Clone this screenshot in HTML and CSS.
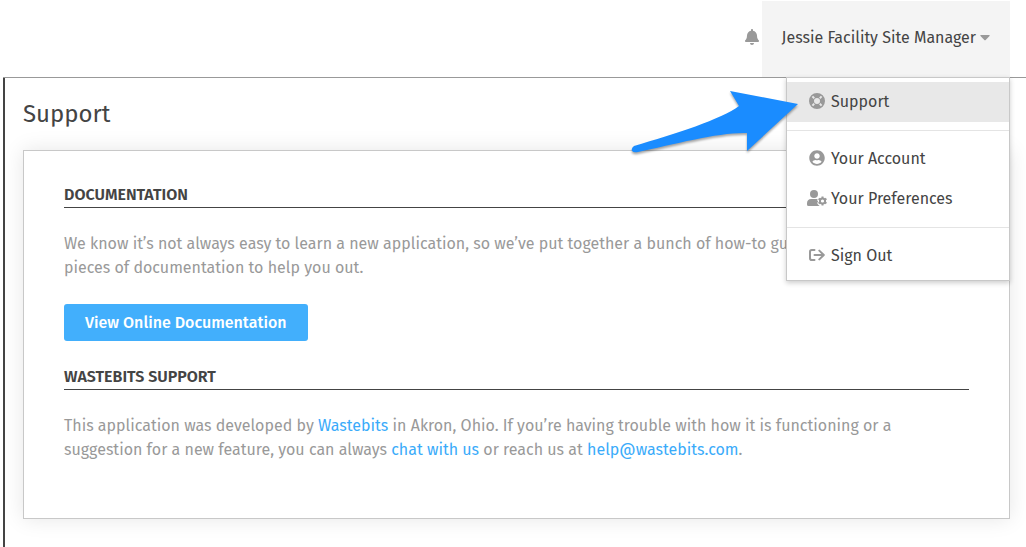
FILE: index.html
```html
<!DOCTYPE html>
<html lang="en">
<head>
    <meta charset="UTF-8">
    <meta name="viewport" content="width=device-width, initial-scale=1.0">
    <title>Support</title>
    <link rel="stylesheet" href="styles.css">
</head>
<body>
    <header class="topbar">
        <button type="button" class="bell" aria-label="Notifications">
            <svg width="14" height="16" viewBox="0 0 448 512"><path d="M224 512c35.32 0 63.97-28.65 63.97-64H160.03c0 35.35 28.65 64 63.97 64zm215.39-149.71c-19.32-20.76-55.47-51.99-55.47-154.29 0-77.7-54.48-139.9-127.94-155.16V32c0-17.67-14.32-32-31.98-32s-31.98 14.33-31.98 32v20.84C118.56 68.1 64.08 130.3 64.08 208c0 102.3-36.15 133.53-55.47 154.29-6 6.45-8.66 14.16-8.61 21.71.11 16.4 12.98 32 32.1 32h383.8c19.12 0 32-15.6 32.1-32 .05-7.55-2.61-15.27-8.61-21.71z"/></svg>
        </button>
        <div class="user">
            <button type="button" class="user-toggle" aria-expanded="true">
                Jessie Facility Site Manager
                <svg width="10" height="6" viewBox="0 0 10 6"><path d="M1 0h8q1.2.2.5 1.1L5.7 4.9q-.7.6-1.4 0L.5 1.1Q-.2.2 1 0z"/></svg>
            </button>
            <nav class="menu">
                <a href="#" class="menu-item active">
                    <svg width="20" height="16" viewBox="-10 -8 20 16">
                        <circle class="ring" r="5.5"/>
                        <path class="ticks" d="M-2.8-2.8l-1.8-1.8M2.8-2.8l1.8-1.8M-2.8 2.8l-1.8 1.8M2.8 2.8l1.8 1.8"/>
                    </svg>
                    Support
                </a>
                <hr>
                <a href="#" class="menu-item">
                    <svg width="20" height="16" viewBox="-72 0 640 512"><path d="M248 8C111 8 0 119 0 256s111 248 248 248 248-111 248-248S385 8 248 8zm0 96c48.6 0 88 39.4 88 88s-39.4 88-88 88-88-39.4-88-88 39.4-88 88-88zm0 344c-58.7 0-111.3-26.6-146.5-68.2 18.8-35.4 55.6-59.8 98.5-59.8 2.4 0 4.8.4 7.1 1.1 13 4.2 26.6 6.9 40.9 6.9 14.3 0 28-2.7 40.9-6.9 2.3-.7 4.7-1.1 7.1-1.1 42.9 0 79.7 24.4 98.5 59.8C359.3 421.4 306.7 448 248 448z"/></svg>
                    Your Account
                </a>
                <a href="#" class="menu-item">
                    <svg width="20" height="16" viewBox="0 0 20 16">
                        <circle cx="7" cy="4" r="4"/>
                        <path d="M4.2 9h5.6l.9.2-.5 1 .9 1.3-.9 1.5.8 1.5 1.6 1.5H1.5Q0 16 0 14.5v-1.3Q0 9.3 4.2 9z"/>
                        <circle class="cog" cx="15.5" cy="11" r="2.6"/>
                        <path class="teeth" d="M15.5 6.5v1.7M15.5 13.8v1.7M11.6 8.7l1.5.9M17.9 12.4l1.5.9M11.6 13.3l1.5-.9M17.9 9.6l1.5-.9"/>
                    </svg>
                    Your Preferences
                </a>
                <hr>
                <a href="#" class="menu-item">
                    <svg width="20" height="16" viewBox="0 0 20 16"><path class="line" d="M7.5 3H4.8Q3 3 3 4.8v6.4Q3 13 4.8 13h2.7M7.5 8h9M12.3 3.6L16.8 8l-4.5 4.4"/></svg>
                    Sign Out
                </a>
                <svg class="pointer" width="170" height="72" viewBox="0 0 170 72">
                    <path d="M169 14L101 1l9 15C93 29 46 44 5 56q-3 2-2 5 2 2 6 1C46 54 91 42 118 43v18z"/>
                </svg>
            </nav>
        </div>
    </header>
    <main class="content">
        <h1>Support</h1>
        <div class="card">
            <section>
                <h2>Documentation</h2>
                <p>We know it’s not always easy to learn a new application, so we’ve put together a bunch of how-to guides, tutorials and pieces of documentation to help you out.</p>
                <a href="#" class="btn">View Online Documentation</a>
            </section>
            <section>
                <h2>Wastebits Support</h2>
                <p>This application was developed by <a href="#">Wastebits</a> in Akron, Ohio. If you’re having trouble with how it is functioning or a suggestion for a new feature, you can always <a href="#">chat with us</a> or reach us at <a href="#">help@wastebits.com</a>.</p>
            </section>
        </div>
    </main>
</body>
</html>
```
FILE: styles.css
```css
* {
    box-sizing: border-box;
}
body {
    display: flex;
    flex-direction: column;
    min-height: 100vh;
    margin: 0 0 0 3px;
    font-family: "Fira Sans", "Noto Sans", sans-serif;
    font-size: 16px;
    line-height: 24px;
    color: #444;
    background: #fff;
}
button {
    border: 0;
    font: inherit;
    color: inherit;
    cursor: pointer;
}
svg {
    fill: #999;
}

/* top bar */
.topbar {
    display: flex;
    justify-content: flex-end;
    height: 78px;
    padding: 1px 16px 0 0;
    border-bottom: 1px solid #999;
}
.bell {
    display: flex;
    align-items: center;
    padding: 0 3px 4px;
    background: none;
}
.user {
    position: relative;
    display: flex;
}
.user-toggle {
    display: flex;
    align-items: center;
    gap: 4px;
    padding: 0 20px 2px;
    background: #f4f4f4;
}

/* dropdown */
.menu {
    position: absolute;
    top: 100%;
    right: 0;
    z-index: 2;
    width: 224px;
    padding: 4px 0;
    background: #fff;
    border: 1px solid #c8c8c8;
    box-shadow: 0 2px 5px rgba(0, 0, 0, 0.2);
}
.menu-item {
    display: flex;
    align-items: center;
    gap: 4px;
    padding: 8px 20px;
    color: #444;
    text-decoration: none;
}
.menu-item svg {
    margin-bottom: 2px;
}
.menu-item.active {
    background: #e8e8e8;
}
.menu hr {
    margin: 8px 0;
    border: 0;
    border-top: 1px solid #e4e4e4;
}
.ring {
    fill: none;
    stroke: #999;
    stroke-width: 5;
}
.ticks {
    stroke: #e8e8e8;
    stroke-width: 2;
}
.cog,
.teeth {
    fill: none;
    stroke: #999;
    stroke-width: 2;
}
.line {
    fill: none;
    stroke: #999;
    stroke-width: 2;
    stroke-linecap: round;
    stroke-linejoin: round;
}
.pointer {
    position: absolute;
    top: 12px;
    left: -158px;
    fill: #1a8cff;
    filter: drop-shadow(0 2px 1px rgba(0, 0, 0, 0.35));
    pointer-events: none;
}

/* page */
.content {
    flex: 1;
    padding: 20px 16px 28px 18px;
    border-left: 2px solid #444;
}
h1 {
    margin: 0 0 20px;
    font-size: 24px;
    line-height: 32px;
    font-weight: 400;
}
.card {
    padding: 32px 40px 56px;
    border: 1px solid #c8c8c8;
    box-shadow: 0 0 20px rgba(0, 0, 0, 0.1);
}
h2 {
    margin: 0 0 24px;
    border-bottom: 1px solid #444;
    font-size: 16px;
    line-height: 24px;
    font-weight: 600;
    text-transform: uppercase;
}
p {
    margin: 0 0 24px;
    color: #999;
}
a {
    color: #3aabfa;
    text-decoration: none;
}
.btn {
    display: inline-block;
    margin-bottom: 24px;
    padding: 7px 21px 6px;
    border-radius: 3px;
    background: #42affc;
    color: #fff;
    font-weight: 500;
}
section:last-child p {
    margin-bottom: 0;
}
```
